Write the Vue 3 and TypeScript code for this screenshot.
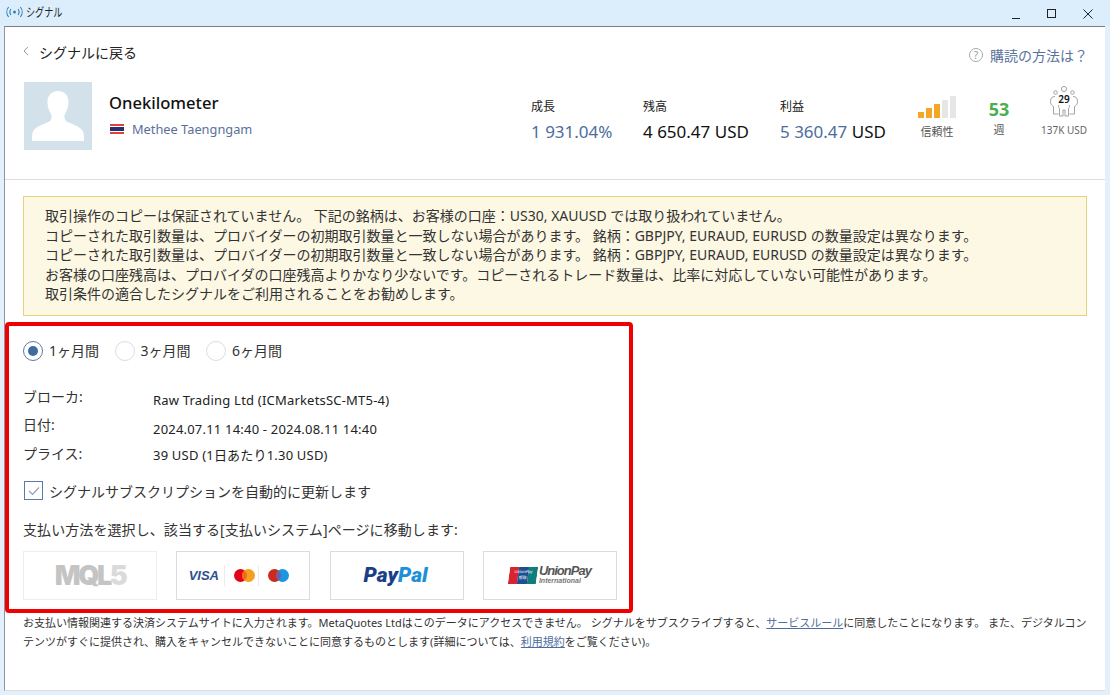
<template>
  <div class="window">
    <header class="titlebar">
      <div class="title">
        <svg class="title-icon" width="17" height="12" viewBox="0 0 17 12" fill="none" stroke="#2f7fb5" stroke-width="1.1">
          <circle cx="8.5" cy="6" r="1.5" fill="#2f7fb5" stroke="none" />
          <path d="M5 3a5 5 0 0 0 0 6M12 3a5 5 0 0 1 0 6M2.6 1a8 8 0 0 0 0 10M14.4 1a8 8 0 0 1 0 10" />
        </svg>
        <span class="title-text">シグナル</span>
      </div>
      <div class="controls">
        <svg width="12" height="12" viewBox="0 0 12 12" stroke="#222"><path d="M2 10.5h8" /></svg>
        <svg width="12" height="12" viewBox="0 0 12 12" fill="none" stroke="#222"><rect x="1.5" y="1.5" width="8" height="8" /></svg>
        <svg width="12" height="12" viewBox="0 0 12 12" stroke="#222"><path d="M1.5 1.5l9 9M10.5 1.5l-9 9" /></svg>
      </div>
    </header>

    <main class="panel">
      <section class="head">
        <div class="top-row">
          <a class="back">
            <svg width="6" height="10" viewBox="0 0 6 10" fill="none" stroke="#999"><path d="M5 .8L1 5l4 4.2" /></svg>
            <span>シグナルに戻る</span>
          </a>
          <a class="help">
            <span class="help-icon">?</span>
            <span>購読の方法は？</span>
          </a>
        </div>

        <div class="profile">
          <div class="avatar">
            <svg width="68" height="68" viewBox="0 0 68 68">
              <path fill="#fff" d="M34 9c-7 0-10.500 5-10.500 11 0 5 1.500 9 3.500 12 1 2 1 5-1 7-5 3.500-16 5-17.500 12-.5 2.500-.5 4-.5 8h52c0-4 0-5.500-.5-8-1.500-7-12.500-8.500-17.500-12-2-2-2-5-1-7 2-3 3.500-7 3.500-12C44.500 14 41 9 34 9z" />
            </svg>
          </div>
          <div class="who">
            <div class="name">Onekilometer</div>
            <div class="owner">
              <span class="flag"></span>
              <span>Methee Taengngam</span>
            </div>
          </div>
          <div class="stats">
            <div v-for="s in stats" :key="s.label" class="stat" :style="{ width: s.width + 'px' }">
              <div class="stat-label">{{ s.label }}</div>
              <div class="stat-value">
                <span :class="{ blue: s.blue }">{{ s.value }}</span>{{ s.unit ? ' ' + s.unit : '' }}
              </div>
            </div>
          </div>
          <div class="meters">
            <div class="meter meter-bars">
              <div class="bars">
                <i v-for="(h, i) in bars" :key="i" :class="{ on: i < 3 }" :style="{ height: h + 'px' }"></i>
              </div>
              <span class="meter-label">信頼性</span>
            </div>
            <div class="meter meter-weeks">
              <b class="weeks">53</b>
              <span class="meter-label">週</span>
            </div>
            <div class="meter meter-subs">
              <div class="people">
                <svg width="30" height="32" viewBox="0 0 30 32" fill="none" stroke="#9a9a9a" stroke-width="0.9">
                  <circle cx="15" cy="3" r="2.600" />
                  <circle cx="6.500" cy="6.500" r="1.800" />
                  <circle cx="23.500" cy="6.500" r="1.800" />
                  <path d="M6 10.500C3 10.500 1.500 12 1.500 15.500c0 2.500 1 4 3 5v7.500h5M24 10.500c3 0 4.500 1.500 4.500 5 0 2.500-1 4-3 5v7.500h-5M9.500 19c0 2 .5 3 1 3.500V30h3.500v-6h2v6h3.500v-7.500c.5-.5 1-1.500 1-3.500" />
                </svg>
                <b>29</b>
              </div>
              <span class="subs-label">137K USD</span>
            </div>
          </div>
        </div>
      </section>

      <section class="warning">
        <p v-for="(line, i) in warnings" :key="i">{{ line }}</p>
      </section>

      <section class="order">
        <div class="periods">
          <label v-for="(p, i) in periods" :key="p" class="period">
            <span class="radio" :class="{ checked: i === 0 }"></span>
            <span>{{ p }}</span>
          </label>
        </div>

        <dl class="details">
          <template v-for="d in details" :key="d.label">
            <dt>{{ d.label }}</dt>
            <dd>{{ d.value }}</dd>
          </template>
        </dl>

        <label class="renew">
          <span class="checkbox">
            <svg width="12" height="10" viewBox="0 0 12 10" fill="none" stroke="#8aa0bd" stroke-width="1.2"><path d="M1 5l3.500 3.500L11 1.500" /></svg>
          </span>
          <span>シグナルサブスクリプションを自動的に更新します</span>
        </label>

        <p class="pay-title">支払い方法を選択し、該当する[支払いシステム]ページに移動します:</p>

        <div class="pay-methods">
          <div class="pay-card pay-mql">
            <span class="mql">MQL<em>5</em></span>
          </div>
          <div class="pay-card pay-cards">
            <span class="visa">VISA</span>
            <svg class="card-logo" width="21" height="13" viewBox="0 0 21 13">
              <circle cx="6.500" cy="6.500" r="6.500" fill="#e3001b" />
              <circle cx="14.500" cy="6.500" r="6.500" fill="#f59e20" />
              <path d="M10.500 1.400a6.500 6.500 0 0 1 0 10.200 6.500 6.500 0 0 1 0-10.200z" fill="#f26a14" />
            </svg>
            <svg class="card-logo" width="21" height="13" viewBox="0 0 21 13">
              <circle cx="6.500" cy="6.500" r="6.500" fill="#cc2a1c" />
              <circle cx="14.500" cy="6.500" r="6.500" fill="#1b96e0" />
              <path d="M10.500 1.400a6.500 6.500 0 0 1 0 10.200 6.500 6.500 0 0 1 0-10.200z" fill="#7a5a9a" />
            </svg>
          </div>
          <div class="pay-card">
            <span class="paypal"><span>Pay</span><span class="pal">Pal</span></span>
          </div>
          <div class="pay-card pay-union">
            <div class="union-flag">
              <i class="u-red"></i><i class="u-blue"></i><i class="u-teal"></i>
              <span class="u-text">UnionPay<br />银联</span>
            </div>
            <div class="union-name">
              <span>UnionPay</span>
              <small>International</small>
            </div>
          </div>
        </div>
      </section>

      <p class="note">
        お支払い情報関連する決済システムサイトに入力されます。MetaQuotes Ltdはこのデータにアクセスできません。 シグナルをサブスクライブすると、<a>サービスルール</a>に同意したことになります。 また、デジタルコンテンツがすぐに提供され、購入をキャンセルできないことに同意するものとします(詳細については、<a>利用規約</a>をご覧ください)。
      </p>
    </main>

    <div class="highlight"></div>
  </div>
</template>

<script setup lang="ts">
interface Stat {
  label: string
  value: string
  unit?: string
  blue?: boolean
  width: number
}

const stats: Stat[] = [
  { label: '成長', value: '1 931.04%', blue: true, width: 112 },
  { label: '残高', value: '4 650.47 USD', width: 137 },
  { label: '利益', value: '5 360.47', unit: 'USD', blue: true, width: 139 },
]

const bars = [6, 10, 14, 18, 22]

const warnings = [
  '取引操作のコピーは保証されていません。 下記の銘柄は、お客様の口座：US30, XAUUSD では取り扱われていません。',
  'コピーされた取引数量は、プロバイダーの初期取引数量と一致しない場合があります。 銘柄：GBPJPY, EURAUD, EURUSD の数量設定は異なります。',
  'コピーされた取引数量は、プロバイダーの初期取引数量と一致しない場合があります。 銘柄：GBPJPY, EURAUD, EURUSD の数量設定は異なります。',
  'お客様の口座残高は、プロバイダの口座残高よりかなり少ないです。コピーされるトレード数量は、比率に対応していない可能性があります。',
  '取引条件の適合したシグナルをご利用されることをお勧めします。',
]

const periods = ['1ヶ月間', '3ヶ月間', '6ヶ月間']

const details = [
  { label: 'ブローカ:', value: 'Raw Trading Ltd (ICMarketsSC-MT5-4)' },
  { label: '日付:', value: '2024.07.11 14:40 - 2024.08.11 14:40' },
  { label: 'プライス:', value: '39 USD (1日あたり1.30 USD)' },
]
</script>

<style>
html,
body {
  margin: 0;
  background: #e3f0fb;
}
</style>

<style scoped>
.window {
  position: relative;
  width: 1110px;
  height: 695px;
  overflow: hidden;
  display: flex;
  flex-direction: column;
  background: #e3f0fb;
  font-family: "Noto Sans", "Noto Sans CJK JP", sans-serif;
  color: #222;
}

.titlebar {
  height: 26px;
  flex-shrink: 0;
  display: flex;
  justify-content: space-between;
  align-items: center;
  background: #dceefc;
  padding: 0 16px 0 6px;
  box-sizing: border-box;
}

.title {
  display: flex;
  align-items: center;
  gap: 3px;
  font-size: 12px;
  margin-top: -3px;
}

.title-text {
  display: inline-block;
  transform: scaleX(0.76);
  transform-origin: left center;
}

.controls {
  display: flex;
  gap: 24px;
  margin-top: 2px;
}

.panel {
  flex: 1;
  margin: 0 5px 4px 4px;
  background: #fff;
  border-top: 1px solid #7c7c7c;
  border-left: 1px solid #8d96a0;
  border-bottom: 1px solid #dcdcdc;
  display: flex;
  flex-direction: column;
}

.head {
  height: 152px;
  flex-shrink: 0;
  border-bottom: 1px solid #dddddd;
  padding: 0 17px 0 18px;
}

.top-row {
  display: flex;
  justify-content: space-between;
  padding-top: 15px;
  height: 39px;
  box-sizing: border-box;
}

.back {
  display: flex;
  align-items: center;
  height: 20px;
  gap: 10px;
  font-size: 14px;
  color: #222;
}

.back svg {
  margin-top: -2px;
}

.help {
  display: flex;
  align-items: center;
  gap: 7px;
  height: 20px;
  margin-top: 3px;
  font-size: 14px;
  color: #5a729c;
}

.help-icon {
  width: 12px;
  height: 12px;
  border: 1px solid #aaa;
  border-radius: 50%;
  color: #999;
  font-size: 10px;
  line-height: 12px;
  text-align: center;
}

.profile {
  display: flex;
  margin-top: 16px;
  padding-left: 1px;
}

.avatar {
  width: 68px;
  height: 68px;
  background: #d3e2ea;
  flex-shrink: 0;
}

.who {
  width: 422px;
  margin-left: 17px;
  flex-shrink: 0;
}

.name {
  font-size: 16.600px;
  line-height: 22px;
  margin-top: 10px;
  color: #111;
  font-weight: 500;
}

.owner {
  display: flex;
  align-items: center;
  gap: 8px;
  margin-top: 6px;
  padding-left: 1px;
  font-size: 12.800px;
  line-height: 18px;
  color: #5a6f9a;
}

.flag {
  width: 14px;
  height: 10px;
  background: linear-gradient(#e0403f 0 17%, #fff 17% 33%, #27306e 33% 67%, #fff 67% 83%, #e0403f 83%);
}

.stats {
  display: flex;
  flex-shrink: 0;
}

.stat-label {
  font-size: 12px;
  line-height: 16px;
  margin-top: 17px;
}

.stat-value {
  font-size: 17px;
  line-height: 22px;
  margin-top: 6px;
  white-space: nowrap;
  color: #111;
}

.blue {
  color: #4d6d9c;
}

.meters {
  display: flex;
}

.meter {
  display: flex;
  flex-direction: column;
  align-items: center;
}

.meter-label {
  font-size: 11px;
  line-height: 16px;
  color: #555;
}

.meter-bars {
  width: 38px;
  margin-left: -1px;
}

.bars {
  display: flex;
  align-items: flex-end;
  gap: 1.500px;
  height: 22px;
  margin-top: 14px;
  margin-bottom: 6px;
}

.bars i {
  width: 6.500px;
  background: #e6e6e6;
}

.bars i.on {
  background: #f4a626;
}

.meter-weeks {
  width: 22px;
  margin-left: 32px;
}

.weeks {
  font-size: 18px;
  line-height: 24px;
  margin: 15px 0 1px;
  color: #4cae50;
}

.meter-subs {
  width: 50px;
  margin-left: 29px;
}

.people {
  position: relative;
  width: 30px;
  height: 32px;
  margin-top: 4px;
  margin-bottom: 5px;
}

.people b {
  position: absolute;
  left: 0;
  right: 0;
  top: 6px;
  text-align: center;
  font-size: 10px;
  line-height: 14px;
  font-weight: 600;
  color: #111;
}

.subs-label {
  font-size: 10px;
  line-height: 14px;
  color: #666;
  white-space: nowrap;
}

.warning {
  margin: 16px 18px 0 18px;
  height: 120px;
  box-sizing: border-box;
  padding: 9px 21px;
  background: #fdf8e3;
  border: 1px solid #e4d27e;
  flex-shrink: 0;
}

.warning p {
  margin: 0;
  font-size: 14px;
  line-height: 19.500px;
  color: #333;
  white-space: nowrap;
}

.order {
  padding: 0 0 0 18px;
  flex-shrink: 0;
}

.periods {
  display: flex;
  margin-top: 25px;
  height: 20px;
  font-size: 14px;
  line-height: 20px;
}

.period {
  display: flex;
  align-items: center;
  gap: 6px;
  width: 91.500px;
  color: #333;
}

.radio {
  width: 18px;
  height: 18px;
  border: 1px solid #dcdcdc;
  border-radius: 50%;
  position: relative;
}

.radio.checked {
  border-color: #5a7ba6;
}

.radio.checked::after {
  content: "";
  position: absolute;
  inset: 4px;
  border-radius: 50%;
  background: #3f6ba5;
}

.details {
  display: grid;
  grid-template-columns: 130px 1fr;
  grid-auto-rows: 28.500px;
  margin: 22px 0 0;
  align-items: center;
}

.details dt {
  font-size: 14px;
  color: #333;
  margin-top: -3px;
}

.details dd {
  margin: 6px 0 0;
  font-size: 13px;
  letter-spacing: 0.200px;
  color: #222;
}

.details dd:last-child {
  margin-top: 0;
}

.renew {
  display: flex;
  align-items: center;
  gap: 6px;
  margin-top: 12px;
  padding-left: 1px;
  font-size: 14px;
  color: #333;
}

.checkbox {
  width: 17px;
  height: 17px;
  border: 1px solid #5a7ba6;
  display: flex;
  align-items: center;
  justify-content: center;
}

.pay-title {
  margin: 19px 0 0;
  font-size: 14px;
  line-height: 20px;
  letter-spacing: 0.080px;
  color: #333;
}

.pay-methods {
  display: flex;
  gap: 19.300px;
  margin-top: 11px;
}

.pay-card {
  width: 134px;
  height: 49px;
  box-sizing: border-box;
  border: 1px solid #dcdcdc;
  display: flex;
  align-items: center;
  justify-content: center;
  overflow: hidden;
}

.pay-mql {
  border-color: #eeeeee;
}

.mql {
  font-family: Inter, sans-serif;
  font-weight: 900;
  font-size: 27px;
  letter-spacing: -2.500px;
  color: #c4c4c4;
}

.mql em {
  font-style: normal;
  color: #dadada;
}

.pay-cards {
  gap: 0;
  padding-right: 6px;
}

.visa {
  font-family: "Liberation Sans", sans-serif;
  font-weight: 700;
  font-style: italic;
  font-size: 13px;
  color: #2f4f8f;
  margin-right: 5px;
}

.card-logo {
  padding: 4px 0 4px 9px;
  margin-right: 3px;
  border-left: 1px solid #ececec;
  box-sizing: content-box;
}

.paypal {
  font-family: Roboto, sans-serif;
  font-weight: 900;
  font-style: italic;
  font-size: 21px;
  color: #1b3f87;
  margin-left: -2px;
}

.pal {
  color: #1f8fd6;
}

.pay-union {
  gap: 2px;
}

.union-flag {
  position: relative;
  width: 28px;
  height: 17px;
  display: flex;
  overflow: hidden;
  transform: skewX(-8deg);
}

.union-flag i {
  flex: 1;
}

.u-red { background: #d9232e; }
.u-blue { background: #1d4f91; }
.u-teal { background: #0d7d80; }

.u-text {
  position: absolute;
  inset: 2px 0 0;
  color: #fff;
  font-size: 4px;
  line-height: 6px;
  text-align: center;
}

.union-name {
  display: flex;
  flex-direction: column;
  font-family: "Liberation Sans", sans-serif;
  font-weight: 700;
  font-style: italic;
  color: #555;
}

.union-name span {
  font-size: 13px;
  line-height: 12px;
  letter-spacing: -1px;
}

.union-name small {
  font-size: 7px;
  line-height: 8px;
  color: #777;
}

.note {
  margin: 13px 18px 0;
  font-size: 11px;
  line-height: 19px;
  color: #333;
}

.note a {
  color: #4d6d9c;
  text-decoration: underline;
}

.highlight {
  position: absolute;
  left: 5px;
  top: 322px;
  width: 628px;
  height: 291px;
  box-sizing: border-box;
  border: 4px solid #f00000;
  border-radius: 4px;
  pointer-events: none;
}
</style>
